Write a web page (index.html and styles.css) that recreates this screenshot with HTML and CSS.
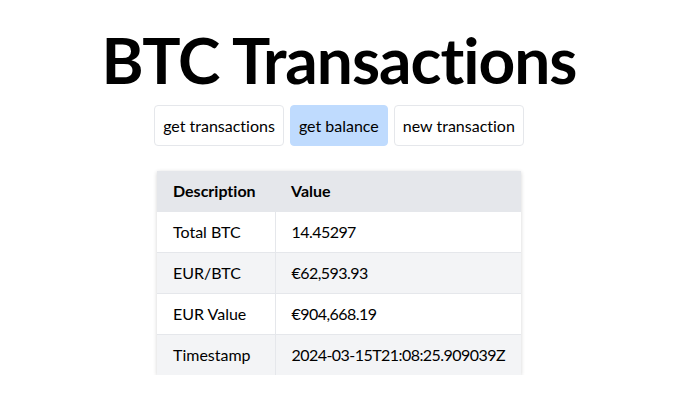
FILE: index.html
```html
<!DOCTYPE html>
<html>
<head>
<meta charset="utf-8">
<link rel="stylesheet" href="styles.css">
</head>
<body>
<main class="app">
  <h1 class="title">BTC Transactions</h1>
  <div class="actions">
    <button class="btn">get transactions</button>
    <button class="btn btn-active">get balance</button>
    <button class="btn">new transaction</button>
  </div>
  <table class="balance">
    <thead>
      <tr><th class="col-desc">Description</th><th>Value</th></tr>
    </thead>
    <tbody>
      <tr><td>Total BTC</td><td>14.45297</td></tr>
      <tr><td>EUR/BTC</td><td>€62,593.93</td></tr>
      <tr><td>EUR Value</td><td>€904,668.19</td></tr>
      <tr><td>Timestamp</td><td>2024-03-15T21:08:25.909039Z</td></tr>
    </tbody>
  </table>
</main>
</body>
</html>
```
FILE: styles.css
```css
* { box-sizing: border-box; }
html, body { margin: 0; padding: 0; background: #fff; }
body {
  font-family: "Lato", "Noto Sans", sans-serif;
  font-variant-ligatures: none;
  color: #000;
  font-size: 16px;
}
.app {
  display: flex;
  flex-direction: column;
  align-items: center;
  padding: 20px 13px 0 0;
}
.title {
  font-size: 64px;
  font-weight: 700;
  line-height: 80px;
  letter-spacing: -1px;
  margin: 0;
}
.actions {
  display: flex;
  gap: 6px;
  margin-top: 5px;
}
.btn {
  font-family: inherit;
  font-variant-ligatures: none;
  font-size: 16px;
  line-height: 24px;
  color: #000;
  background: #fff;
  border: 1px solid #e5e7eb;
  border-radius: 4px;
  padding: 8px 8px;
  height: 41px;
}
.btn-active { background: #bfdbfe; border-color: #bfdbfe; }
.balance {
  margin-top: 25px;
  border-collapse: collapse;
  box-shadow: 0 1px 4px rgba(0,0,0,0.18);
}
.balance th, .balance td {
  text-align: left;
  padding: 8px 16px;
  line-height: 24px;
}
.balance .col-desc { width: 118px; }
.balance th { background: #e5e7eb; font-weight: 700; }
.balance td { border: 1px solid #e5e7eb; border-bottom: none; }
.balance td:first-child { border-left: none; }
.balance td:last-child { border-right: none; letter-spacing: -0.55px; }
.balance tbody tr:nth-child(even) td { background: #f3f4f6; }
```
